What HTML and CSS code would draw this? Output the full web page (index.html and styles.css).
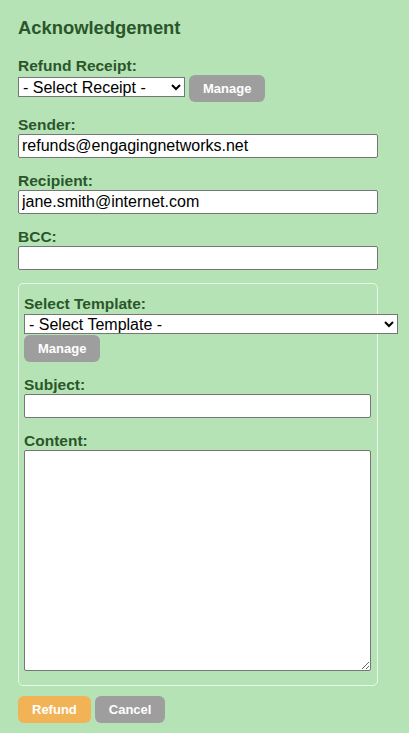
FILE: index.html
```html
<!DOCTYPE html>
<html>
<head>
<meta charset="utf-8">
<link rel="stylesheet" href="styles.css">
</head>
<body>
<div class="panel">
  <h2 class="title">Acknowledgement</h2>
  <div class="field first">
    <label class="lbl">Refund Receipt:</label>
    <div class="row">
      <select class="sel sel-receipt"><option>- Select Receipt -</option></select>
      <button class="btn btn-grey">Manage</button>
    </div>
  </div>
  <div class="field">
    <label class="lbl">Sender:</label>
    <input class="inp" type="text" value="refunds@engagingnetworks.net">
  </div>
  <div class="field">
    <label class="lbl">Recipient:</label>
    <input class="inp" type="text" value="jane.smith@internet.com">
  </div>
  <div class="field">
    <label class="lbl">BCC:</label>
    <input class="inp" type="text" value="">
  </div>
  <div class="box">
    <div class="field first">
      <label class="lbl">Select Template:</label>
      <select class="sel sel-template"><option>- Select Template -</option></select>
      <div class="row">
        <button class="btn btn-grey">Manage</button>
      </div>
    </div>
    <div class="field">
      <label class="lbl">Subject:</label>
      <input class="inp" type="text" value="">
    </div>
    <div class="field">
      <label class="lbl">Content:</label>
      <textarea class="txt"></textarea>
    </div>
  </div>
  <div class="actions">
    <button class="btn btn-orange">Refund</button>
    <button class="btn btn-grey">Cancel</button>
  </div>
</div>
</body>
</html>
```

FILE: styles.css
```css
html, body {
  margin: 0;
  padding: 0;
}
body {
  background: #b5e3b5;
  font-family: "Liberation Sans", Arial, sans-serif;
  padding: 17px 18px;
}
.panel {
  width: 360px;
  display: flex;
  flex-direction: column;
}
.title {
  margin: 0 0 18px 0;
  font-size: 18.4px;
  line-height: 22px;
  font-weight: bold;
  color: #2b562b;
}
.field {
  display: flex;
  flex-direction: column;
  align-items: flex-start;
  margin-top: 14px;
}
.field.first {
  margin-top: 0;
}
.lbl {
  display: block;
  font-size: 15.5px;
  line-height: 17px;
  font-weight: bold;
  color: #2b562b;
  margin-bottom: 1px;
}
.row {
  display: flex;
  align-items: flex-start;
  gap: 4px;
}
.sel {
  box-sizing: border-box;
  height: 20px;
  font-family: "Liberation Sans", Arial, sans-serif;
  font-size: 16px;
  color: #000;
  background: #fff;
  border: 1px solid #767676;
  border-radius: 0;
  padding: 0;
  margin: 0;
}
.sel-receipt {
  width: 167px;
  margin-top: 2px;
}
.sel-template {
  width: 374px;
  margin-top: 1px;
  margin-bottom: 1px;
}
.inp {
  box-sizing: border-box;
  width: 100%;
  height: 24px;
  margin: 0;
  padding: 1px 3px;
  font-family: "Liberation Sans", Arial, sans-serif;
  font-size: 16px;
  color: #000;
  background: #fff;
  border: 1px solid #767676;
  border-radius: 2px;
}
.txt {
  box-sizing: border-box;
  width: 100%;
  height: 221px;
  margin: 0;
  font-family: "Liberation Sans", Arial, sans-serif;
  font-size: 16px;
  background: #fff;
  border: 1px solid #767676;
  border-radius: 2px;
}
.btn {
  box-sizing: border-box;
  height: 27px;
  padding: 0 14px;
  border: none;
  border-radius: 6px;
  font-family: "Liberation Sans", Arial, sans-serif;
  font-size: 13px;
  font-weight: bold;
  color: #fff;
  cursor: pointer;
}
.btn-grey {
  background: #9e9e9e;
}
.btn-orange {
  background: #f2b256;
}
.box {
  margin-top: 13px;
  border: 1px solid #eaf7ea;
  border-radius: 5px;
  padding: 11px 6px 14px 5px;
  display: flex;
  flex-direction: column;
}
.actions {
  display: flex;
  gap: 4px;
  margin-top: 10px;
}
```
